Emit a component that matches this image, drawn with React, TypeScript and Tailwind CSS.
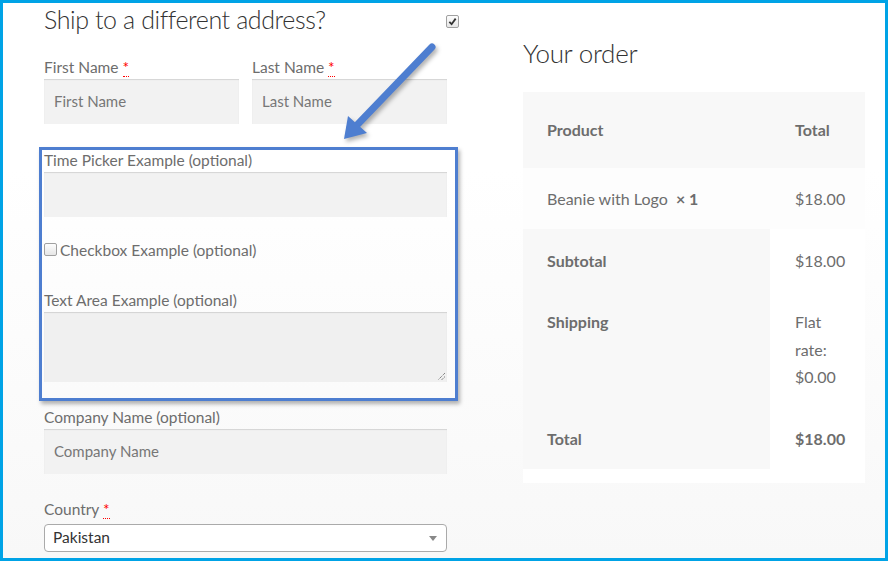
import React from "react";

const font = { fontFamily: "Lato, 'Noto Sans', sans-serif" };

function Req() {
  return (
    <abbr className="text-[#ff0000] no-underline border-b border-dotted border-[#ff0000] leading-none">*</abbr>
  );
}

function Label({ children }: { children: React.ReactNode }) {
  return <label className="block h-6 leading-6 text-[15.5px] text-[#6d6d6d]">{children}</label>;
}

function Input({ placeholder, className = "" }: { placeholder?: string; className?: string }) {
  return (
    <div
      className={
        "h-[45px] bg-[#f2f2f2] shadow-[inset_0_1px_1px_rgba(0,0,0,0.125)] px-[10px] flex items-center text-[15px] text-[#777] " +
        className
      }
    >
      {placeholder}
    </div>
  );
}

function Checkbox({ checked = false }: { checked?: boolean }) {
  return (
    <span className="relative inline-flex w-[13px] h-[13px] rounded-[2px] border border-[#a0a0a0] bg-gradient-to-b from-[#fdfdfd] to-[#e6e6e6] items-center justify-center">
      {checked && (
        <svg width="9" height="9" viewBox="0 0 10 10">
          <path d="M1.5 5.5 L4 8 L8.5 1.8" fill="none" stroke="#333" strokeWidth="2" />
        </svg>
      )}
    </span>
  );
}

export default function App() {
  return (
    <div
      className="relative w-[888px] h-[561px] overflow-hidden border-[3px] border-[#00a3e6] bg-gradient-to-b from-white from-30% to-[#f8f8f8]"
      style={font}
    >
      <div className="flex pl-[41px] -mt-[3px]">
        {/* billing/shipping form */}
        <div className="w-[403px]">
          <div className="flex items-center justify-between h-[38px]">
            <h3 className="text-[25px] font-light text-[#333] leading-[38px] tracking-[-0.4px]">
              Ship to a different address?
            </h3>
            <span className="mr-[-12px] mt-[1px]">
              <Checkbox checked />
            </span>
          </div>

          <div className="flex gap-[13px] mt-[17px]">
            <div className="w-[195px]">
              <Label>
                First Name <Req />
              </Label>
              <Input placeholder="First Name" />
            </div>
            <div className="w-[195px]">
              <Label>
                Last Name <Req />
              </Label>
              <Input placeholder="Last Name" />
            </div>
          </div>

          <div className="mt-[24px]">
            <Label>Time Picker Example (optional)</Label>
            <Input />
          </div>

          <div className="mt-[22px] h-6 flex items-center gap-[3px] text-[15.5px] text-[#6d6d6d]">
            <span className="-mt-[1px]">
              <Checkbox />
            </span>
            Checkbox Example (optional)
          </div>

          <div className="mt-[25px]">
            <Label>Text Area Example (optional)</Label>
            <div className="relative h-[70px] bg-[#f0f0f0] shadow-[inset_0_1px_1px_rgba(0,0,0,0.125)]">
              <svg className="absolute right-[1px] bottom-[1px]" width="9" height="9" viewBox="0 0 9 9">
                <path d="M8 1 L1 8 M8 4.5 L4.5 8" stroke="#555" strokeWidth="1" strokeDasharray="1 1" />
              </svg>
            </div>
          </div>

          <div className="mt-[23px]">
            <Label>Company Name (optional)</Label>
            <Input placeholder="Company Name" />
          </div>

          <div className="mt-[23px]">
            <Label>
              Country <Req />
            </Label>
            <div className="mt-[3px] h-[28px] rounded-[4px] border border-[#aaa] bg-white flex items-center justify-between pl-[8px] pr-[9px] text-[15.5px] text-[#333]">
              Pakistan
              <span className="w-0 h-0 border-l-[4px] border-r-[4px] border-t-[5px] border-l-transparent border-r-transparent border-t-[#888]" />
            </div>
          </div>
        </div>

        {/* order review */}
        <div className="ml-[76px] w-[342px]">
          <h3 className="mt-[34px] h-[38px] leading-[38px] text-[26px] font-light text-[#333] tracking-[-0.3px]">
            Your order
          </h3>
          <div className="mt-[20px] bg-white text-[16px] text-[#6d6d6d] pb-[14px]">
            <div className="flex h-[76px] items-center bg-[#f8f8f8] font-bold">
              <div className="w-[247px] pl-[24px]">Product</div>
              <div className="pl-[25px]">Total</div>
            </div>
            <div className="flex h-[61px] items-center bg-[#fdfdfd]">
              <div className="w-[247px] pl-[24px]">
                Beanie with Logo&nbsp; <strong className="font-bold">× 1</strong>
              </div>
              <div className="pl-[25px]">$18.00</div>
            </div>
            <div className="flex">
              <div className="w-[247px] bg-[#f8f8f8] font-bold pl-[24px]">
                <div className="h-[63px] pt-[20px] leading-6">Subtotal</div>
                <div className="h-[115px] pt-[18px] leading-6">Shipping</div>
                <div className="h-[62px] pt-[20px] leading-6">Total</div>
              </div>
              <div className="pl-[25px]">
                <div className="h-[63px] pt-[20px] leading-6">$18.00</div>
                <div className="h-[115px] pt-[16px] leading-[27.5px]">
                  Flat
                  <br />
                  rate:
                  <br />
                  $0.00
                </div>
                <div className="h-[62px] pt-[20px] leading-6 font-bold">$18.00</div>
              </div>
            </div>
          </div>
        </div>
      </div>

      {/* annotation: highlight box */}
      <div className="absolute left-[36px] top-[144px] w-[419px] h-[254px] border-[3px] border-[#4e7ed0] shadow-[2px_3px_4px_rgba(0,0,0,0.3)] pointer-events-none" />

      {/* annotation: arrow */}
      <svg className="absolute left-0 top-0 pointer-events-none" width="888" height="561" style={{ filter: "drop-shadow(2px 3px 2px rgba(0,0,0,0.3))" }}>
        <g transform="translate(-3,-3)">
          <line x1="432" y1="47" x2="358" y2="124" stroke="#4e7ed0" strokeWidth="7" strokeLinecap="round" />
          <polygon points="344,139 348,116 367,133" fill="#4e7ed0" />
        </g>
      </svg>
    </div>
  );
}
